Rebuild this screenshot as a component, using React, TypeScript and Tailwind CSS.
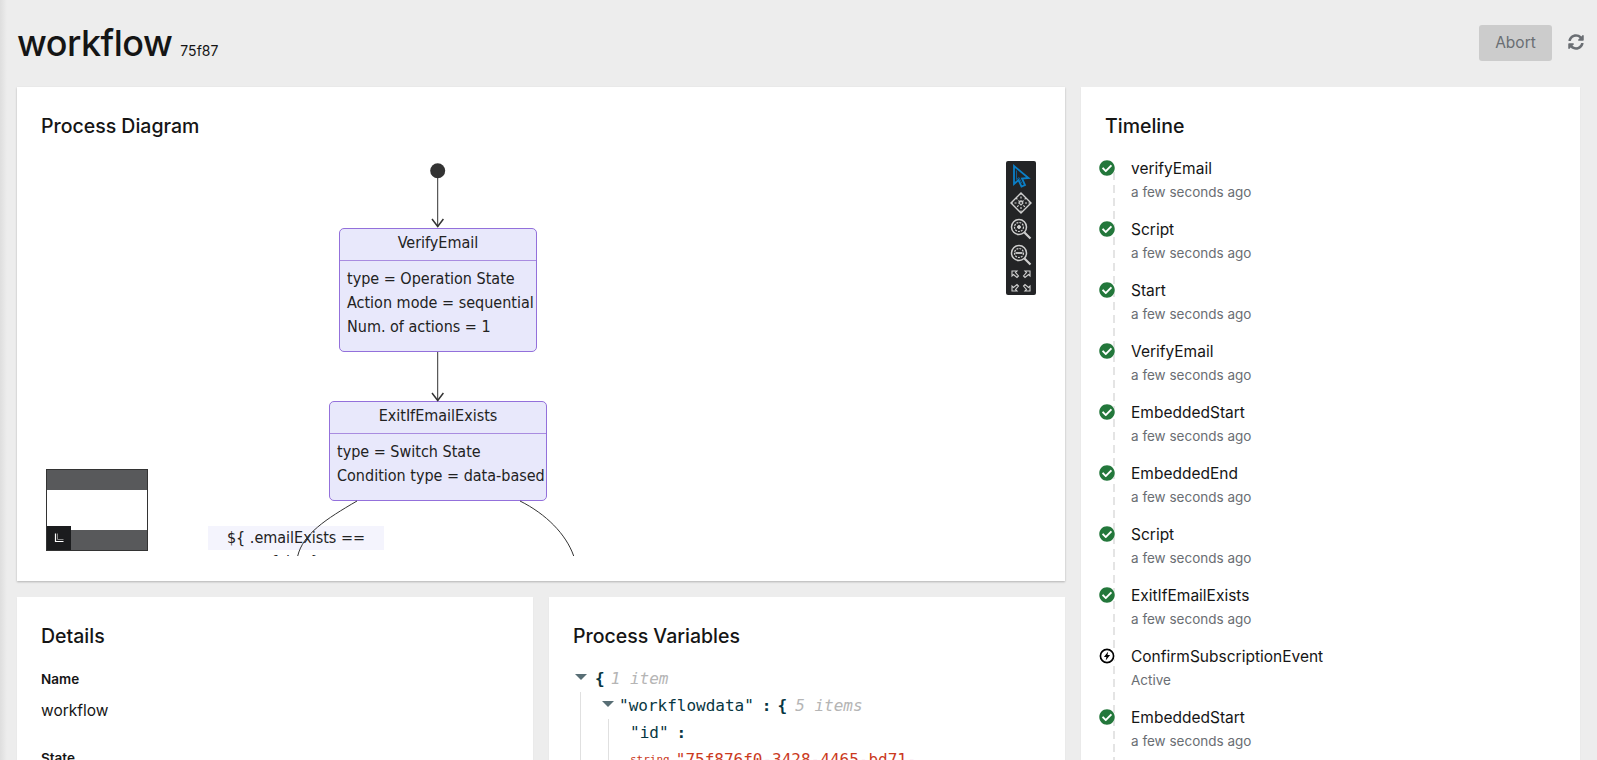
import { FaCheckCircle, FaSyncAlt } from "react-icons/fa";

const UI_FONT = "font-['Inter','Noto_Sans',sans-serif]";
const DIAGRAM_FONT = "font-['DejaVu_Sans_Condensed','DejaVu_Sans',sans-serif]";

const timeline = [
  { name: "verifyEmail", time: "a few seconds ago" },
  { name: "Script", time: "a few seconds ago" },
  { name: "Start", time: "a few seconds ago" },
  { name: "VerifyEmail", time: "a few seconds ago" },
  { name: "EmbeddedStart", time: "a few seconds ago" },
  { name: "EmbeddedEnd", time: "a few seconds ago" },
  { name: "Script", time: "a few seconds ago" },
  { name: "ExitIfEmailExists", time: "a few seconds ago" },
  { name: "ConfirmSubscriptionEvent", time: "Active", active: true },
  { name: "EmbeddedStart", time: "a few seconds ago" },
];

function BoltIcon() {
  return (
    <svg width="16" height="16" viewBox="0 0 16 16" className="rounded-full bg-white">
      <circle cx="8" cy="8" r="6.6" fill="none" stroke="#000" strokeWidth="1.7" />
      <path d="M9.2 3.6 4.9 8.9h2.5l-.7 3.5 4.4-5.4H8.5z" fill="#000" />
    </svg>
  );
}

function TimelineRow({ name, time, active }: { name: string; time: string; active?: boolean }) {
  return (
    <li className="flex h-[61px] items-start">
      <span className="z-10 mt-[3px] flex h-4 w-4 items-center justify-center rounded-full bg-white text-[#23773b]">
        {active ? <BoltIcon /> : <FaCheckCircle size={16} />}
      </span>
      <div className="ml-[16px]">
        <div className="text-[15.5px] leading-6 text-[#151515]">{name}</div>
        <div className="text-[13.5px] leading-[22px] text-[#6a6e73]">{time}</div>
      </div>
    </li>
  );
}

function Toolbar() {
  return (
    <div className="absolute left-[965px] top-[12px] flex h-[134px] w-[30px] flex-col items-center rounded-[2px] bg-[#232426] pt-[3px]">
      <svg width="24" height="26" viewBox="0 0 24 26" fill="none">
        <path d="M5 2v18l4.500-4 3 6.500 3.500-1.500-3-6.500 6.500-.5z" stroke="#0b7fc7" strokeWidth="1.800" />
        <path d="M7.500 6.500v9l2.500-2 3 6" stroke="#0b5f96" strokeWidth="1" />
      </svg>
      <svg width="24" height="26" viewBox="0 0 24 26" fill="none" stroke="#cfcfcf">
        <path d="M12 3 22 13 12 23 2 13z" strokeWidth="1.400" />
        <path d="M7 8l10 10M17 8 7 18M12 3v20M2 13h20" strokeWidth="1.200" strokeDasharray="2 1.500" />
        <circle cx="12" cy="13" r="1.500" fill="#232426" />
      </svg>
      <svg width="24" height="26" viewBox="0 0 24 26" fill="none" stroke="#cfcfcf">
        <circle cx="10" cy="11" r="7.500" strokeWidth="1.500" />
        <circle cx="10" cy="11" r="4.500" strokeWidth="1.200" strokeDasharray="2 1" />
        <circle cx="10" cy="11" r="1.500" fill="#cfcfcf" />
        <path d="m15.500 16.500 6 6" strokeWidth="2.200" />
      </svg>
      <svg width="24" height="26" viewBox="0 0 24 26" fill="none" stroke="#cfcfcf">
        <circle cx="10" cy="11" r="7.500" strokeWidth="1.500" />
        <circle cx="10" cy="11" r="4.500" strokeWidth="1.200" strokeDasharray="2 1" />
        <path d="M6.500 11h7" strokeWidth="1.800" />
        <path d="m15.500 16.500 6 6" strokeWidth="2.200" />
      </svg>
      <svg width="24" height="26" viewBox="0 0 24 26" fill="none" stroke="#cfcfcf" strokeWidth="1.100">
        <path d="M3 3h5L6.500 4.500 9.500 8 8 9.500 4.500 6.500 3 8zM21 3h-5l1.500 1.500L14.500 8 16 9.500l3.500-3L21 8zM3 23h5l-1.500-1.500 3-3.500L8 16.500l-3.500 3L3 18zM21 23h-5l1.500-1.500-3-3.500 1.500-1.500 3.500 3L21 18z" />
      </svg>
    </div>
  );
}

function StateNode({
  title,
  lines,
  className,
  headerClass,
}: {
  title: string;
  lines: string[];
  className: string;
  headerClass: string;
}) {
  return (
    <div className={`absolute rounded-[5px] border border-[#9370db] bg-[#e8e8fb] text-[16px] leading-6 text-[#222] ${className}`}>
      <div className={`border-b border-[#a98ce0] text-center ${headerClass}`}>{title}</div>
      <div className="px-[7px] pt-[6px]">
        {lines.map((line) => (
          <div key={line} className="whitespace-nowrap">{line}</div>
        ))}
      </div>
    </div>
  );
}

function Diagram() {
  return (
    <div className={`relative mt-[10px] h-[407px] overflow-hidden ${DIAGRAM_FONT}`}>
      <div className="absolute left-[167px] top-[377px] h-6 w-[176px] bg-[#f4f4fd] text-center text-[16px] leading-6 text-[#222]">
        {"${ .emailExists == false }"}
      </div>
      <StateNode
        title="VerifyEmail"
        lines={["type = Operation State", "Action mode = sequential", "Num. of actions = 1"]}
        className="left-[298px] top-[79px] h-[124px] w-[198px]"
        headerClass="h-[32px] pt-[2px]"
      />
      <StateNode
        title="ExitIfEmailExists"
        lines={["type = Switch State", "Condition type = data-based"]}
        className="left-[288px] top-[252px] h-[100px] w-[218px]"
        headerClass="h-[32px] pt-[2px]"
      />
      <svg width="1000" height="407" className="pointer-events-none absolute left-0 top-0" fill="none" stroke="#333">
        <circle cx="396.700" cy="21.700" r="7.500" fill="#333" stroke="none" />
        <path d="M396.700 22V78M396.700 203V252" />
        <path d="m391 70 5.700 7.500 5.700-7.500M391 244l5.700 7.500 5.700-7.500" strokeWidth="1.500" />
        <path d="M316 352C285 370 262 385 256.700 407M479 352C505 365 525 385 532.700 407" />
      </svg>
      <Toolbar />
      <div className="absolute left-[5px] top-[320px] flex h-[82px] w-[102px] flex-col border border-[#333] bg-white">
        <div className="h-[20px] bg-[#58595b]" />
        <div className="flex-1" />
        <div className="h-[20px] bg-[#58595b]" />
        <div className="absolute bottom-0 left-0 flex h-[24px] w-[24px] items-center justify-center bg-[#1b1c1e]">
          <svg width="12" height="12" viewBox="0 0 12 12" fill="none">
            <path d="M2.500 1.500v8h8" stroke="#fff" strokeWidth="1.200" />
            <path d="M4.500 1.500v6h6" stroke="#888" strokeWidth="1" />
          </svg>
        </div>
      </div>
    </div>
  );
}

function ProcessVariables() {
  const mono = "font-['DejaVu_Sans_Mono',monospace] text-[16px] leading-[27px] text-[#073642]";
  const triangle = "h-0 w-0 border-x-[6px] border-t-[6px] border-x-transparent border-t-[#586e75]";
  return (
    <div className={`mt-[16px] ${mono}`}>
      <div className="flex h-[27px] items-center pl-[2px]">
        <span className={`${triangle} mb-[4px]`} />
        <span className="ml-[8px] font-bold">{"{"}</span>
        <span className="ml-[6px] italic text-[#b5b5b5]">1 item</span>
      </div>
      <div className="ml-[7px] border-l border-[#e0e0e0] pl-[21px]">
        <div className="flex h-[27px] items-center">
          <span className={`${triangle} mb-[4px]`} />
          <span className="ml-[5px] whitespace-nowrap">"workflowdata"</span>
          <span className="ml-[8px] font-bold">:</span>
          <span className="ml-[6px] font-bold">{"{"}</span>
          <span className="ml-[8px] italic text-[#b5b5b5]">5 items</span>
        </div>
        <div className="ml-[6px] border-l border-[#e0e0e0] pl-[21px]">
          <div className="flex h-[27px] items-center">
            <span>"id"</span>
            <span className="ml-[8px] font-bold">:</span>
          </div>
          <div className="flex h-[27px] items-center whitespace-nowrap text-[#cb3a1e]">
            <span className="mr-[6px] text-[11px]">string</span>
            <span>"75f876f0-3428-4465-bd71-</span>
          </div>
        </div>
      </div>
    </div>
  );
}

export default function App() {
  return (
    <div className={`relative h-[760px] overflow-hidden bg-[#ededed] px-[17px] ${UI_FONT}`}>
      <div className="pointer-events-none absolute inset-y-0 left-0 w-[7px] bg-gradient-to-r from-[#dedede] to-[#ededed]" />
      <header className="relative flex h-[87px] items-start justify-between pr-[-1px]">
        <div className="mt-[21px] flex items-baseline">
          <h1 className="text-[36px] font-medium leading-[44px] tracking-[-0.5px] text-[#151515]">workflow</h1>
          <span className="ml-[8px] text-[14px] text-[#151515]">75f87</span>
        </div>
        <div className="flex items-start">
          <button className="mt-[25px] h-9 w-[73px] rounded-[3px] bg-[#cccccc] text-[15.5px] text-[#6a6e73]">Abort</button>
          <span className="ml-4 mr-[-4px] mt-[34px] text-[#6a6e73]">
            <FaSyncAlt size={16} />
          </span>
        </div>
      </header>
      <main className="relative flex gap-4">
        <div className="flex w-[1048px] flex-col gap-4">
          <section className="h-[494px] bg-white px-6 pt-[26px] shadow-[0_1px_2px_rgba(0,0,0,0.25)]">
            <h2 className="text-[19.5px] font-medium leading-[26px] text-[#151515]">Process Diagram</h2>
            <Diagram />
          </section>
          <div className="flex gap-4">
            <section className="h-[300px] w-[516px] bg-white px-6 pt-[26px] shadow-[0_1px_1px_rgba(0,0,0,0.08)]">
              <h2 className="text-[19.5px] font-medium leading-[26px] text-[#151515]">Details</h2>
              <div className="mt-[20px] text-[13.5px] font-semibold leading-[21px] text-[#151515]">Name</div>
              <div className="mt-[9px] text-[15.5px] leading-6 text-[#151515]">workflow</div>
              <div className="mt-[25px] text-[13.5px] font-semibold leading-[21px] text-[#151515]">State</div>
            </section>
            <section className="h-[300px] w-[516px] bg-white px-6 pt-[26px] shadow-[0_1px_1px_rgba(0,0,0,0.08)]">
              <h2 className="text-[19.5px] font-medium leading-[26px] text-[#151515]">Process Variables</h2>
              <ProcessVariables />
            </section>
          </div>
        </div>
        <section className="h-[700px] w-[503px] bg-white pl-6 pt-[26px] shadow-[0_1px_1px_rgba(0,0,0,0.08)]">
          <h2 className="text-[19.5px] font-medium leading-[26px] text-[#151515]">Timeline</h2>
          <ul className="relative ml-[-6px] mt-[18px]">
            <div className="absolute bottom-0 left-[14px] top-[15px] w-[2px] bg-[repeating-linear-gradient(to_bottom,#e4e4e4_0,#e4e4e4_8px,transparent_8px,transparent_13px)]" />
            {timeline.map((t, i) => (
              <TimelineRow key={t.name + i} {...t} />
            ))}
          </ul>
        </section>
      </main>
    </div>
  );
}
